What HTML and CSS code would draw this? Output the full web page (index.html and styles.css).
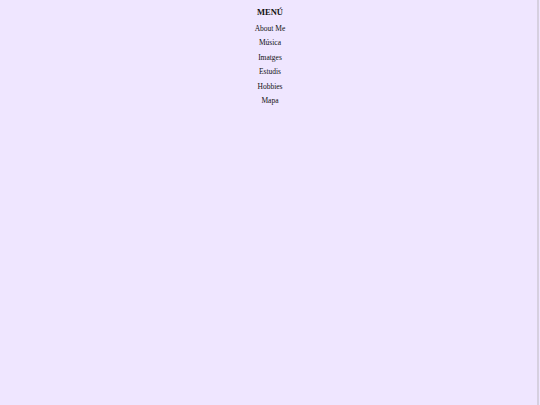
FILE: index.html
```html
<!DOCTYPE html>
<html>
<head>
<meta charset="utf-8">
<link rel="stylesheet" href="styles.css">
</head>
<body>
<div class="page">
  <nav class="menu">
    <h1 class="title">MENÚ</h1>
    <ul class="items">
      <li>About Me</li>
      <li>Música</li>
      <li>Imatges</li>
      <li>Estudis</li>
      <li>Hobbies</li>
      <li>Mapa</li>
    </ul>
  </nav>
</div>
</body>
</html>
```
FILE: styles.css
```css
html, body {
  margin: 0;
  padding: 0;
  height: 100%;
}
body {
  background: #efe6ff;
  font-family: "Liberation Serif", "Times New Roman", serif;
  color: #111;
}
.page {
  height: 100%;
  box-sizing: border-box;
  box-shadow: inset -1px 0 0 #efe6ff, inset -3px 0 0 #d6d0e0;
}
.menu {
  display: flex;
  flex-direction: column;
  align-items: center;
  padding-top: 7px;
}
.title {
  font-size: 8.5px;
  font-weight: bold;
  margin: 0 0 4px 0;
  line-height: 11px;
}
.items {
  list-style: none;
  margin: 0;
  padding: 0;
  text-align: center;
  font-size: 7.5px;
  line-height: 14.4px;
}
```
